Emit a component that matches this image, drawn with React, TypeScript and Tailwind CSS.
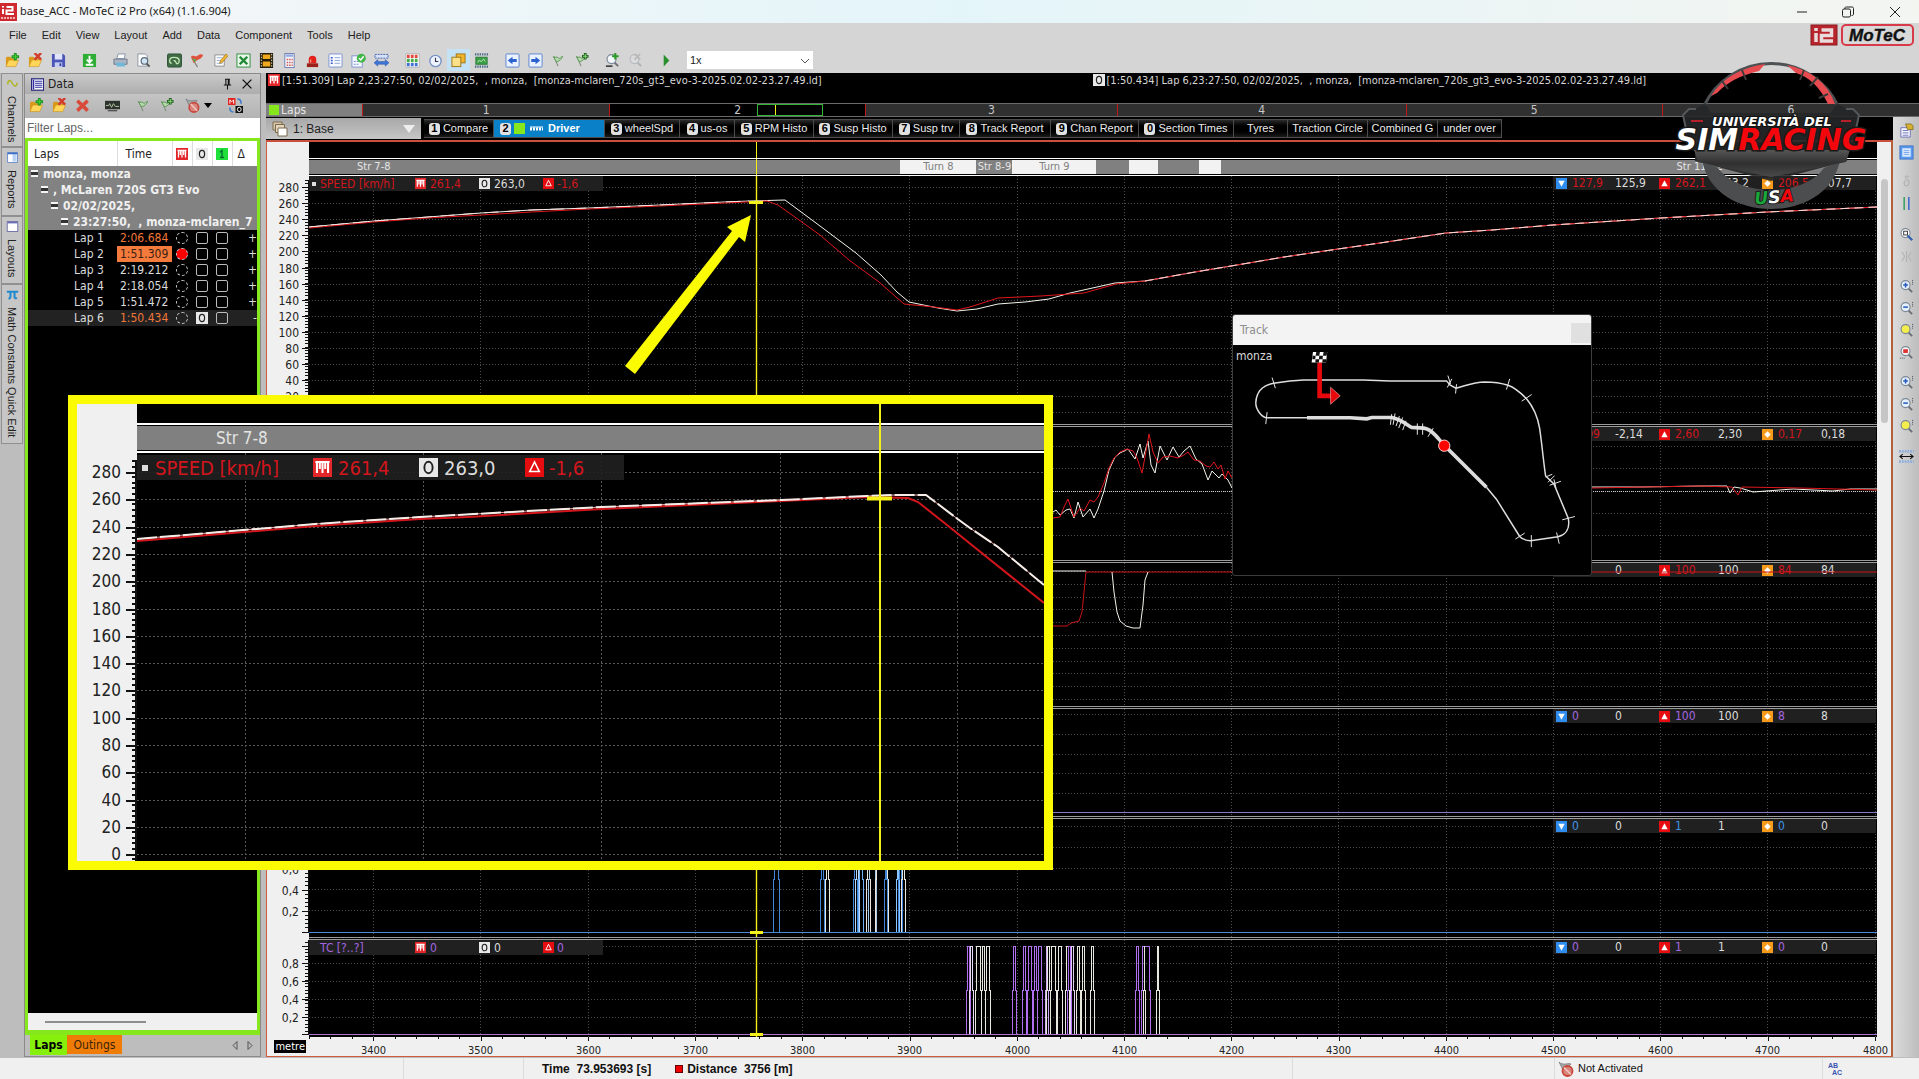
import React from "react";

const TAHOMA = "font-['DejaVu_Sans_Condensed','DejaVu_Sans',sans-serif]";
const UI = "font-['Liberation_Sans',Arial,sans-serif]";

/* ---------- icons (16 x 16) ---------- */
const folder = (
  <>
    <path d="M1 14V5l1-1h4l1 1.500h4.500V8H5z" fill="#d99a1c" />
    <path d="M1 14.500 4 7.500h10.500L11.500 14.500z" fill="#ffd659" stroke="#c98d17" strokeWidth=".6" />
  </>
);
const lens = (c: string) => (
  <>
    <path d="m10 10 4 4" stroke="#6b7076" strokeWidth="2" />
    <circle cx="7" cy="6.500" r="4.800" fill={c} stroke="#7b8794" strokeWidth="1.200" />
  </>
);
const flag = (
  <>
    <path d="M3 3.500 7.500 14" stroke="#7d8f78" strokeWidth="1.200" />
    <path d="M2.500 4c2 2 3.500-1 5 1s3-1 5-1.500c-1 3-3 4.500-6.500 6z" fill="#b8d8b0" stroke="#4f9448" strokeWidth=".9" />
  </>
);
const ICONS: Record<string, React.ReactNode> = {
  open: <>{folder}<path d="M11 0v8M7 4h8" stroke="#1c8e1c" strokeWidth="3" /><path d="M11 1v6M8 4h6" stroke="#3fd03a" strokeWidth="1.200" /></>,
  closeF: <>{folder}<path d="m7 0 7 7m0-7L7 7" stroke="#d33a2c" strokeWidth="2.600" /></>,
  save: <><path d="M1 1h12l2 2v12H1z" fill="#4b55b8" /><path d="M4 1h8v6H4z" fill="#dfe4fb" /><path d="M4 10h8v5H4z" fill="#c6cdf3" /><path d="M9 11h2v3H9z" fill="#39429b" /></>,
  down: <><rect x="1" y="1" width="14" height="14" fill="#2fae35" /><path d="M8 3v6M5 7l3 3 3-3M4 12.500h8" stroke="#fff" strokeWidth="2" fill="none" /></>,
  print: <><path d="M4 6 5.500 1H13l-1 5z" fill="#fff" stroke="#8392a8" /><path d="M1 6.500h14V12H1z" fill="#aab4c4" stroke="#6b7788" /><path d="M3 10.500h9l1 4H4z" fill="#6fb9d8" /></>,
  preview: <><path d="M2 1h8l2 2v11H2z" fill="#fdfdfd" stroke="#8b93a0" /><circle cx="9" cy="8.500" r="3.500" fill="#cfe4f4" stroke="#5f6c7c" strokeWidth="1.300" /><path d="m11.500 11.500 3 3" stroke="#555" strokeWidth="2" /></>,
  track: <><rect x=".5" y="1" width="15" height="14" rx="1.500" fill="#3f6b45" stroke="#2c5034" /><path d="M5 11c-3 0-3-5 0-6s8 0 8 3-2 4-3 3 0-3-3-3" stroke="#c3e8b4" strokeWidth="1.400" fill="none" /></>,
  flagRed: <><path d="M2 5 8 15" stroke="#777" strokeWidth="1.200" /><path d="M1 4c3-3 4 1 7-1s4-2 6-1c-1 3-3 4-5 5S6 9 4 11z" fill="#e05240" /><path d="M2 5c2 1 3 2 5 1l-2 4z" fill="#58ad4d" /></>,
  note: <><path d="M2 2h10v12H2z" fill="#fbfbfb" stroke="#8e8e8e" /><path d="M4 5h6M4 8h5M4 11h6" stroke="#9db2d0" /><path d="m7 11 1-3 6-7 2 2-6 7z" fill="#f2b632" stroke="#8d6412" strokeWidth=".6" /></>,
  excel: <><rect x="1" y="1" width="14" height="14" fill="#e9f6e9" stroke="#2f8b3c" /><path d="m4 4 8 8m0-8-8 8" stroke="#1e8a34" strokeWidth="2.600" /></>,
  film: <><rect x="1" y="0" width="14" height="16" fill="#231c08" /><path d="M4 1.500h8v5H4zM4 9h8v5.500H4z" fill="#f0a81c" /><path d="M2.500 1v14M13.500 1v14" stroke="#efe6c8" strokeWidth="1" strokeDasharray="1.500 1.500" /></>,
  calc: <><rect x="3" y="0.500" width="10" height="15" fill="#f2f4fb" stroke="#6f7fb0" /><path d="M4 1.500h8v2.500H4z" fill="#93a9e0" /><path d="M5 7h6.500M5 10h6.500M5 13h6.500" stroke="#d25d56" strokeWidth="1.600" strokeDasharray="1.600 1" /></>,
  alarm: <><path d="M4 11V7a4 4 0 0 1 8 0v4z" fill="#e3211b" /><path d="M6 10V7" stroke="#ff9b90" strokeWidth="1.300" /><rect x="2" y="11" width="12" height="4" fill="#9a2019" /></>,
  list: <><rect x="1" y="1" width="14" height="14" rx="1" fill="#f6f9ff" stroke="#7d93cf" /><path d="M7 5h6M7 8h6M7 11h6" stroke="#8ea6dc" /><path d="M3 5h2M3 8h2M3 11h2" stroke="#3458c4" strokeWidth="1.600" /></>,
  check: <><rect x="1" y="3" width="11" height="12" fill="#f6f9ff" stroke="#7d93cf" /><path d="M3 9h6M3 12h6" stroke="#6f8bd0" strokeDasharray="2 1" /><circle cx="11" cy="5.500" r="4.800" fill="#42b649" /><path d="m8.500 5.500 2 2 3-4" stroke="#fff" strokeWidth="1.500" fill="none" /></>,
  ruler: <><path d="M1 1.500h14v4H1z" fill="#d7e2fa" stroke="#405fa8" strokeDasharray="2 1" /><path d="M0 10.500 4 7v2h8V7l4 3.500-4 3.500v-2H4v2z" fill="#3e76d8" stroke="#2850a0" strokeWidth=".5" /></>,
  grid: <><rect x="1" y="1" width="14" height="14" fill="#fff" stroke="#888" strokeWidth=".5" />{[0, 1, 2].map((i) => <path key={i} d={`M2 ${3.5 + i * 4.5}h12`} stroke={["#e3473c", "#47ad4a", "#3f6fd6"][i]} strokeWidth="3.500" strokeDasharray="3 1.200" />)}</>,
  clock: <><circle cx="8" cy="8.500" r="6" fill="#eef4ff" stroke="#7b94c4" strokeWidth="1.500" /><path d="M8 5v4h3" stroke="#334" fill="none" strokeWidth="1.200" /></>,
  windows: <><rect x="5.500" y="1" width="9.500" height="9.500" fill="#f3b52c" stroke="#9c7413" /><rect x="1" y="4.500" width="9.500" height="10" fill="#fbe08a" stroke="#9c7413" /></>,
  range: <><path d="M1 1.500h14M1 14.500h14" stroke="#4d6a86" strokeWidth="2.500" strokeDasharray="1.500 1" /><rect x="2" y="4.500" width="12" height="7.500" fill="#3aa048" stroke="#2a7a38" /><path d="M4 10c2-5 3 1 5-2s2 0 3 1" stroke="#d3f0c8" fill="none" /></>,
  left: <><rect x="1" y="1" width="14" height="14" rx="1" fill="#eaf1ff" stroke="#5c83cf" /><path d="m3 8 5-4v2.500h4.500v3H8V12z" fill="#2c62cf" /></>,
  right: <><rect x="1" y="1" width="14" height="14" rx="1" fill="#eaf1ff" stroke="#5c83cf" /><path d="m13 8-5-4v2.500H3.500v3H8V12z" fill="#2c62cf" /></>,
  flag,
  flagPlus: <>{flag}<path d="M12 0v7M8.500 3.500h7" stroke="#1f5f1c" strokeWidth="3" /><path d="M12 1v5M9.500 3.500h5" stroke="#8de07c" strokeWidth="1" /></>,
  zoomPlus: <>{lens("#f2f7fb")}<path d="M11 0v7M7.500 3.500h7" stroke="#2a9a28" strokeWidth="2.200" /><path d="M1 14h7" stroke="#222" strokeWidth="1.500" /></>,
  zoomOff: <g opacity=".35">{lens("#e8e8e8")}<path d="m7 1 6 6m0-6L7 7" stroke="#888" strokeWidth="2" /></g>,
  play: <path d="M5 1.500v13l6-6.500z" fill="#27902c" />,
  del: <path d="m2.500 3 11 10.500m0-10.500-11 10.500" stroke="#d84a3a" strokeWidth="3.800" />,
  scope: <><rect x="0" y="3" width="16" height="9" fill="#2c332c" /><path d="M1 8h3l1-2 2 4 2-4 2 3h4" stroke="#b6c4a2" fill="none" /><path d="M3 13.500h10" stroke="#555" strokeWidth="1.500" /></>,
  block: <><path d="M1 1c2 2 4 2 6 2s4-1 6 0l-4 4-4 2z" fill="#a3aaa3" stroke="#667" strokeWidth=".6" /><circle cx="9.500" cy="10" r="5" fill="#d9867c" stroke="#c9463c" strokeWidth="1.800" /><path d="m6 6.500 7 7" stroke="#f2c9c3" strokeWidth="1.500" /></>,
  swap: <><rect x="0" y="0" width="8" height="7.500" fill="#e02420" /><path d="M2 6V2l2 2 2-2v4" stroke="#fff" fill="none" /><rect x="8" y="8.500" width="8" height="7.500" fill="#111" /><ellipse cx="12" cy="12.200" rx="2" ry="2.300" stroke="#fff" fill="none" /><path d="M10 1c4 0 4 3 4 5M6 15c-4 0-4-3-4-5" stroke="#3d77cc" strokeWidth="1.600" fill="none" /></>,
  props: <><path d="M2 5h10v10H2z" fill="#f7f7ff" stroke="#6d72b8" /><path d="M4 8h6M4 10.500h6M4 13h6" stroke="#6d72b8" /><path d="M7 1h6l2 2v4H9z" fill="#d6b12f" stroke="#6f5a12" strokeWidth=".7" /></>,
  blue: <><rect x="1" y="1" width="14" height="14" fill="#5b9af0" stroke="#3f72c5" /><rect x="3.500" y="3.500" width="9" height="9" fill="#dcebff" /><path d="M5 6h6M5 8h6M5 10h6" stroke="#79a6e6" /></>,
  delta: <path d="M10.500 3c-3-2-5 0-2 2.500s3 6 0 7-4.500-4-1-5.500" stroke="#b0b0b0" fill="none" strokeWidth="1.200" />,
  slashes: <path d="M3 3l3 5-3 5M13 3l-3 5 3 5M8 2v12" stroke="#b4b4b4" fill="none" strokeWidth="1.200" />,
  bars: <><path d="M5.500 1v14" stroke="#2d9b57" strokeWidth="1.500" /><path d="M10.500 1v14" stroke="#2e5fd0" strokeWidth="1.500" /></>,
  zoomIn: <>{lens("#e6f0fa")}<path d="M7 4v5M4.500 6.500h5" stroke="#2459bf" strokeWidth="1.600" /><path d="M14.500 1v6" stroke="#345" strokeDasharray="1 1" /></>,
  zoomOut: <>{lens("#e6f0fa")}<path d="M4.500 6.500h5" stroke="#2459bf" strokeWidth="1.600" /><path d="M14.500 1v6" stroke="#345" strokeDasharray="1 1" /></>,
  zoomY: <>{lens("#f4ee4c")}<path d="M14.500 1v6" stroke="#345" strokeDasharray="1 1" /></>,
  zoomR: <>{lens("#f6f6f6")}<rect x="4.500" y="4.500" width="5" height="4" fill="#d33" /><path d="M1 14h6" stroke="#345" strokeDasharray="1 1" /></>,
  zoomW: <>{lens("#ffffff")}<path d="m9 9 5 5" stroke="#2f62b5" strokeWidth="2.200" /><rect x="5" y="4.500" width="4" height="4" fill="none" stroke="#333" /></>,
  fit: <><path d="M0 2.500h16M0 13.500h16" stroke="#8fb0dc" strokeWidth="3" strokeDasharray="2 1" /><path d="M1 8h14M4 5.500 1 8l3 2.500M12 5.500 15 8l-3 2.500" stroke="#111" fill="none" strokeWidth="1.200" /></>,
  wave: <path d="M2 9c1-7 4-5 6-1s4 5 6-1" stroke="#b0b51d" strokeWidth="1.800" fill="none" />,
  report: <><rect x="2" y="2" width="12" height="12" fill="#fff" stroke="#5a82c8" /><path d="M8 3h5v10H8z" fill="#bcd3f4" /><path d="M2 3h12" stroke="#3d6fc4" strokeWidth="2" /></>,
  layout: <><rect x="1.500" y="2" width="13" height="12" fill="#fff" stroke="#5b5f9b" /><path d="M2 3.200h12" stroke="#6a70b4" strokeWidth="2" /></>,
  pi: <path d="M1 4.500h14M5.500 4v6c0 2-1 3-2.500 3M10.500 4v7c0 2 1.500 2 3 1" stroke="#1f8ad0" strokeWidth="2.500" fill="none" />,
  data: <><rect x=".5" y="1" width="15" height="14" fill="#fff" stroke="#26267c" strokeWidth="1.500" /><path d="M5 4h9M5 6.500h9M5 9h9M5 11.500h9" stroke="#2d2da0" strokeWidth="1.300" /><path d="M3 2v12" stroke="#2d2da0" strokeWidth="2" /></>,
  pin: <path d="M5 1.500h6M6 1.500v7M10 1.500v7M9 1.500v7M3.500 8.500h9M8 8.500V14" stroke="#111" strokeWidth="1.300" />,
  x: <path d="m3 3 10 10m0-10L3 13" stroke="#111" strokeWidth="1.600" />,
  stack: <><path d="M1 1h9v8H1z" fill="#d9c7ab" stroke="#7c6a4c" /><path d="M3.500 3.500h9v8h-9z" fill="#e5d6bd" stroke="#7c6a4c" /><path d="M6 7h9v8H6z" fill="#fff" stroke="#7c6a4c" /></>,
};

function Icon({ n, size = 16 }: { n: string; size?: number }) {
  return (
    <svg width={size} height={size} viewBox="0 0 16 16" fill="none" aria-hidden="true" className="shrink-0">
      {ICONS[n]}
    </svg>
  );
}

function IconButton({ n, on }: { n: string; on?: boolean }) {
  return (
    <button aria-label={n} className={`flex h-[22px] w-[23px] shrink-0 items-center justify-center ${on ? "bg-[#c4e2f6]" : ""}`}>
      <Icon n={n} size={15} />
    </button>
  );
}

/* ---------- small channel badges ---------- */
function Badge({ kind, size = 12 }: { kind: "M" | "O" | "D" | "min" | "max" | "avg" | "one"; size?: number }) {
  const bg = { M: "#e3262a", O: "#e8e8e8", D: "#e60d10", min: "#2f8df0", max: "#e60d10", avg: "#f59a1b", one: "#1fe03a" }[kind];
  return (
    <svg width={size} height={size} viewBox="0 0 12 12" className="shrink-0" aria-hidden="true">
      <rect width="12" height="12" fill={bg} />
      {kind === "M" && <path d="M1.500 2.500h9M2.500 2.500v7M6 2.500v7M9.500 2.500v7M4.300 3v4M7.700 3v4" stroke="#fff" strokeWidth="1.300" fill="none" />}
      {kind === "O" && <ellipse cx="6" cy="6" rx="2.600" ry="3.600" fill="none" stroke="#222" strokeWidth="1.200" />}
      {kind === "D" && <path d="M6 2.500 9 8.500H3z" fill="none" stroke="#fff" />}
      {kind === "min" && <path d="M2.500 3h7L6 9.500z" fill="#fff" />}
      {kind === "max" && <path d="M2.500 9h7L6 2.500z" fill="#fff" />}
      {kind === "avg" && <path d="m6 2.500 3.500 3.500L6 9.500 2.500 6z" fill="#fff" />}
      {kind === "one" && <path d="M4 4.200 6 2.500v7M4 9.500h4" stroke="#063" fill="none" strokeWidth="1.300" />}
    </svg>
  );
}

/* ---------- chart data ---------- */
const LEFT = 309;
const WIDTH = 1568;
const CURSOR = 756;
const GRID_X = Array.from({ length: 15 }, (_, i) => Math.round(373 + i * 107.25) + 0.5);

const SPEED_HEAD = "309,227 374,221 428,217 481,213 531,210 589,208 660,205 724,202 749,201";
const SPEED_TAIL = "1145,281 1195,272 1231,266 1284,257 1338,249 1380,243 1406,239 1446,233 1492,230 1553,225 1661,218 1767,212 1877,207";
const SPEED_W = `${SPEED_HEAD} 785,200 820,226 856,253 881,275 897,292 909,302 938,308 957,311 977,309 998,304 1025,302 1049,299 1070,293 1115,283 ${SPEED_TAIL}`;
const SPEED_R = `309,228 374,222 428,218 481,215 531,212 589,209 660,206 724,203 767,201 778,205 820,235 849,260 879,282 904,304 934,307 957,310 970,307 998,298 1041,296 1084,293 1116,284 ${SPEED_TAIL}`;
const G_W = "1044,516 1053,512 1056,510 1060,515 1066,510 1070,509 1074,518 1078,502 1083,517 1090,509 1094,518 1098,509 1104,491 1109,470 1115,457 1120,453 1128,449 1135,459 1140,444 1143,458 1148,441 1151,465 1155,473 1160,446 1163,452 1167,460 1173,447 1179,457 1184,451 1190,446 1196,459 1202,464 1208,480 1212,471 1219,478 1222,474 1228,480 1232,488 1400,487 1592,487 1640,487 1700,486 1727,486 1730,493 1734,487 1740,488 1747,490 1753,492 1793,489 1833,491 1850,489 1877,489";
const G_R = "1044,518 1053,518 1060,517 1064,507 1068,499 1074,517 1080,508 1084,511 1090,500 1094,502 1098,497 1104,483 1109,468 1114,458 1120,452 1127,449 1133,451 1137,458 1142,473 1145,457 1149,434 1153,452 1158,463 1163,457 1170,456 1178,458 1184,455 1188,452 1194,460 1200,461 1206,466 1210,467 1214,462 1218,469 1221,465 1225,479 1228,471 1232,478 1400,488 1592,488 1700,486 1732,487 1738,495 1742,487 1800,488 1877,490";
const THR_R = "1044,626 1067,626 1071,623 1079,621 1082,612 1086,572 1877,572";
const THR_W1 = "1044,571 1086,571";
const THR_W2 = "1112,572 1114,592 1117,612 1120,621 1126,626 1133,628 1140,628 1143,605 1145,580 1148,572";

type Pulse = [number, number, string];
const BLUE = "#3f86d6";
const PURPLE = "#b070f0";
const PALE = "#e8e8de";
const ABS: Pulse[] = [
  [773, 779, BLUE], [820, 824, BLUE], [825, 829, PALE], [853, 857, BLUE], [855, 859, "#bcd8f8"], [858, 863, "#6db0f5"],
  [866, 870, PALE], [868, 876, "#a9c8e8"], [875, 888, PALE], [884, 887, BLUE], [896, 899, "#8cc4ff"], [898, 902, BLUE], [901, 905, PALE],
];
const TC: Pulse[] = [
  [966, 970, PURPLE], [969, 973, "#e8dcf4"], [975, 981, PALE], [981, 985, PALE], [985, 990, PALE], [1012, 1016, PURPLE],
  [1022, 1026, PURPLE], [1027, 1032, PURPLE], [1033, 1037, PURPLE], [1037, 1042, PURPLE], [1045, 1048, "#d0a8f4"], [1046, 1050, PALE],
  [1050, 1056, PALE], [1057, 1062, PALE], [1065, 1069, PALE], [1067, 1071, PURPLE], [1070, 1074, "#e2cff2"], [1076, 1080, PALE],
  [1081, 1085, PALE], [1090, 1094, PALE], [1135, 1139, PURPLE], [1141, 1150, PURPLE], [1143, 1145, PALE], [1156, 1159, PALE],
];

function Pulses({ data, top, mid, base }: { data: Pulse[]; top: number; mid: number; base: number }) {
  return (
    <g shapeRendering="crispEdges">
      {data.map(([a, b, c], i) => (
        <polyline key={i} points={`${a},${base} ${a},${mid} ${a + 1},${mid} ${a + 1},${top} ${b - 1},${top} ${b - 1},${mid} ${b},${mid} ${b},${base}`} stroke={c} fill="none" />
      ))}
    </g>
  );
}

function Trace({ pts, c }: { pts: string; c: string }) {
  return <polyline points={pts} stroke={c} fill="none" strokeWidth="1" />;
}

/* ---------- panel pieces ---------- */
type Tick = [number, string];
function Axis({ top, height, ticks, sub }: { top: number; height: number; ticks: Tick[]; sub: number }) {
  const pct = (y: number) => `${((y - top) / height) * 100}%`;
  const step = ticks.length > 1 ? (ticks[1][0] - ticks[0][0]) / sub : 0;
  const minor = step ? Array.from({ length: (ticks.length - 1) * sub + 3 }, (_, i) => ticks[0][0] + (i - 2) * step) : [];
  return (
    <svg className={`h-full w-[42px] shrink-0 overflow-hidden text-[12px] ${TAHOMA}`} shapeRendering="crispEdges">
      <line x1="41.5" x2="41.5" y1={pct(minor[0] ?? top)} y2={pct(ticks.length ? ticks[ticks.length - 1][0] : top)} stroke="#111" />
      {minor.map((y, i) => <line key={i} x1="38" x2="42" y1={pct(y)} y2={pct(y)} stroke="#111" />)}
      {ticks.map(([y, t]) => (
        <g key={y}>
          <line x1="35" x2="42" y1={pct(y)} y2={pct(y)} stroke="#111" />
          <text x="32" y={pct(y)} dy="5" textAnchor="end" fill="#222">{t}</text>
        </g>
      ))}
    </svg>
  );
}

type Pair = [string, string];
function Stats({ min, max, avg, color }: { min: Pair; max: Pair; avg: Pair; color: string }) {
  return (
    <div className={`absolute right-[1px] top-0 flex h-[14px] w-[323px] items-center bg-[#202020] text-[12px] leading-[14px] ${TAHOMA}`}>
      {([["min", min], ["max", max], ["avg", avg]] as [("min" | "max" | "avg"), Pair][]).map(([k, v]) => (
        <div key={k} className="flex w-[103px] shrink-0 items-center pl-[3px]">
          <Badge kind={k} size={11} />
          <span className={`w-[48px] shrink-0 pl-[5px] ${color}`}>{v[0]}</span>
          <span className="text-[#dcdcdc]">{v[1]}</span>
        </div>
      ))}
    </div>
  );
}

function Legend({ label, values, color, dot }: { label: string; values: [string, string, string]; color: string; dot?: boolean }) {
  return (
    <div className={`absolute left-0 top-0 flex h-[15px] w-[294px] items-center bg-[#202020] text-[12px] leading-[14px] ${color} ${TAHOMA}`}>
      <span className="w-[11px] pl-[3px]">{dot && <span className="block size-[4px] bg-[#ddd]" />}</span>
      <span className="w-[95px]">{label}</span>
      <span className="flex w-[64px] items-center gap-[4px]"><Badge kind="M" size={11} />{values[0]}</span>
      <span className="flex w-[64px] items-center gap-[4px]"><Badge kind="O" size={11} /><span className="text-[#dcdcdc]">{values[1]}</span></span>
      <span className="flex items-center gap-[3px]"><Badge kind="D" size={11} />{values[2]}</span>
    </div>
  );
}

function Panel(p: {
  grow: string; top: number; height: number; ticks: Tick[]; sub: number; rows: number[];
  last?: boolean; overlay: React.ReactNode; children: React.ReactNode;
}) {
  return (
    <>
      <div className={`flex min-h-0 ${p.grow}`}>
        <Axis top={p.top} height={p.height} ticks={p.ticks} sub={p.sub} />
        <div className="relative min-w-0 flex-1 bg-black">
          <svg className="absolute inset-0 h-full w-full" viewBox={`${LEFT} ${p.top} ${WIDTH} ${p.height}`} preserveAspectRatio="none" fill="none">
            <g stroke="#4d4d4d" strokeDasharray="1 2" shapeRendering="crispEdges">
              {p.rows.map((y) => <path key={y} d={`M${LEFT} ${y + 0.5}h${WIDTH}`} />)}
              {GRID_X.map((x) => <path key={x} d={`M${x} ${p.top}v${p.height}`} />)}
            </g>
          </svg>
          {p.overlay}
          <svg className="absolute inset-0 h-full w-full" viewBox={`${LEFT} ${p.top} ${WIDTH} ${p.height}`} preserveAspectRatio="none" fill="none">
            {p.children}
            <path d={`M${CURSOR + 0.5} ${p.top}v${p.height}`} stroke="#f4f01c" strokeWidth="1.400" />
          </svg>
        </div>
      </div>
      {!p.last && <div className="ml-[42px] h-[3px] shrink-0 border-y border-[#9a9a9a] bg-black" />}
    </>
  );
}

const SECTIONS: [string, string, boolean][] = [
  ["flex-[591_1_0%]", "", false],
  ["flex-[76_1_0%]", "Turn 8", true],
  ["flex-[36_1_0%]", "Str 8-9", false],
  ["flex-[84_1_0%]", "Turn 9", true],
  ["flex-[32_1_0%]", "", false],
  ["flex-[29_1_0%]", "", true],
  ["flex-[41_1_0%]", "", false],
  ["flex-[22_1_0%]", "", true],
  ["flex-[656_1_0%]", "", false],
];

const range = (a: number, step: number, n: number) => Array.from({ length: n }, (_, i) => a + Math.round(i * step));

function Chart() {
  const red = "text-[#d3151c]";
  return (
    <section aria-label="Driver graph" className="flex min-h-0 flex-1 border-b border-l border-r-2 border-t-2 border-b-[#cf5a3c] border-l-[#cf5a3c] border-r-[#b55f3b] border-t-[#c8503c] bg-[#f0f0f0]">
      <div className="flex min-h-0 min-w-0 flex-1 flex-col">
        <div className="relative ml-[42px] h-[16px] shrink-0 bg-black">
          <div className="absolute left-[28.500%] top-0 h-full w-[1px] bg-[#f4f01c]" />
        </div>
        <div className={`relative ml-[42px] flex h-[18px] shrink-0 border-y border-white bg-black py-[1px] text-center text-[11px] leading-[14px] ${TAHOMA}`}>
          {SECTIONS.map(([grow, t, turn], i) => (
            <div key={i} className={`overflow-visible whitespace-nowrap ${grow} min-w-0 ${turn ? "bg-[#f2f2f2] text-[#808080]" : "bg-[#808080] text-[#e6e6e6]"}`}>
              {i === 0 ? <span className="block pl-[48px] text-left">Str 7-8</span> : i === 8 ? <span className="block pl-[456px] text-left">Str 11-12</span> : t}
            </div>
          ))}
          <div className="absolute left-[28.500%] top-0 h-full w-[1px] bg-[#f4f01c]" />
        </div>
        <Panel grow="flex-[248_1_0%]" top={176} height={248} sub={5} ticks={range(187, 16.1, 15).map((y, i) => [y, String(280 - i * 20)])} rows={range(187, 16.1, 15)}
          overlay={<><Legend dot label="SPEED [km/h]" values={["261,4", "263,0", "-1,6"]} color={red} /><Stats min={["127,9", "125,9"]} max={["262,1", "263,2"]} avg={["206,5", "207,7"]} color={red} /></>}>
          <Trace pts={SPEED_W} c="#f4f4ec" />
          <Trace pts={SPEED_R} c="#e0161c" />
          <polyline points={SPEED_HEAD} stroke="#fbe0dc" strokeDasharray="14 8" />
          <polyline points={SPEED_TAIL} stroke="#f7dedb" strokeDasharray="9 5" />
          <path d="M749 202.500h14" stroke="#f4f01c" strokeWidth="3" />
        </Panel>
        <Panel grow="flex-[133_1_0%]" top={427} height={133} sub={4} ticks={range(446, 22.3, 5).map((y, i) => [y, String(2 - i)])} rows={range(446, 22.3, 5)}
          overlay={<Stats min={["-1,99", "-2,14"]} max={["2,60", "2,30"]} avg={["0,17", "0,18"]} color={red} />}>
          <path d="M309 491.500h1568" stroke="#c8c8c8" strokeDasharray="1 1" />
          <Trace pts={G_W} c="#f4f4ec" />
          <Trace pts={G_R} c="#e0161c" />
        </Panel>
        <Panel grow="flex-[143_1_0%]" top={563} height={143} sub={2} ticks={range(584, 12.8, 10).map((y, i) => [y, String(90 - i * 10)])} rows={range(571, 12.8, 11)}
          overlay={<Stats min={["0", "0"]} max={["100", "100"]} avg={["84", "84"]} color={red} />}>
          <Trace pts={THR_R} c="#c81418" />
          <Trace pts={THR_W1} c="#f4f4ec" />
          <Trace pts={THR_W2} c="#f4f4ec" />
        </Panel>
        <Panel grow="flex-[107_1_0%]" top={709} height={107} sub={4} ticks={range(714, 19.8, 6).map((y, i) => [y, String(100 - i * 20)])} rows={range(714, 19.8, 5)}
          overlay={<Stats min={["0", "0"]} max={["100", "100"]} avg={["8", "8"]} color="text-[#a466e0]" />}>
          <path d="M309 812.500h1568" stroke="#8a78c4" />
        </Panel>
        <Panel grow="flex-[118_1_0%]" top={819} height={118} sub={5} ticks={[[869, "0,6"], [890, "0,4"], [911, "0,2"], [932, ""]]} rows={range(826, 21, 5)}
          overlay={<Stats min={["0", "0"]} max={["1", "1"]} avg={["0", "0"]} color="text-[#3f93e8]" />}>
          <path d="M309 932.500h1568" stroke="#4a8ad8" />
          <Pulses data={ABS} top={826} mid={879} base={932} />
          <path d="M750 932.500h13" stroke="#f4f01c" strokeWidth="3" />
        </Panel>
        <Panel last grow="flex-[97_1_0%]" top={940} height={97} sub={5} ticks={[[946, ""], [963, "0,8"], [981, "0,6"], [999, "0,4"], [1017, "0,2"], [1034, ""]]} rows={[946, 963, 981, 999, 1017]}
          overlay={<><Legend label="TC [?..?]" values={["0", "0", "0"]} color="text-[#a466e0]" /><Stats min={["0", "0"]} max={["1", "1"]} avg={["0", "0"]} color="text-[#a466e0]" /></>}>
          <path d="M309 1034.500h1568" stroke="#a874cf" />
          <Pulses data={TC} top={946} mid={990} base={1034} />
          <path d="M750 1034.500h13" stroke="#f4f01c" strokeWidth="3" />
        </Panel>
        <div className={`flex h-[19px] shrink-0 text-[11px] ${TAHOMA}`}>
          <div className="flex w-[42px] items-center justify-end pr-[3px]"><span className="bg-black px-[1px] leading-[13px] text-white">metre</span></div>
          <div className="relative flex-1">
            <svg className="absolute inset-0 h-full w-full overflow-visible" shapeRendering="crispEdges">
              {Array.from({ length: 74 }, (_, i) => (
                <line key={i} x1={`${((0.5 + i * 21.45) / WIDTH) * 100}%`} x2={`${((0.5 + i * 21.45) / WIDTH) * 100}%`} y1="0" y2={i % 5 === 3 ? 4 : 2} stroke="#111" />
              ))}
              {GRID_X.map((x, i) => (
                <text key={x} x={`${((x - LEFT) / WIDTH) * 100}%`} y="17" textAnchor="middle" fill="#222">{3400 + i * 100}</text>
              ))}
            </svg>
          </div>
        </div>
      </div>
      <div className="relative w-[14px] shrink-0"><div className="mx-auto mt-[37px] h-[244px] w-[7px] rounded-full bg-[#c6c6c6]" /></div>
    </section>
  );
}

/* ---------- magnified view ---------- */
function Magnifier() {
  const ys = range(472, 27.3, 15);
  const head = "137,539 315,524 420,517 602,507 781,500 867,496";
  const white = `${head} 895,495 926,495 959,520 970,528 998,547 1044,585`;
  const redPts = "137,541 315,526 420,519 468,517 602,509 781,501 867,497 908,498 918,502 947,525 978,550 1044,603";
  return (
    <div className={`absolute left-[68px] top-[395px] flex h-[475px] w-[985px] border-[9px] border-[#fbfb04] bg-[#f0f0f0] ${TAHOMA}`}>
      <svg className="h-full w-[60px] shrink-0 overflow-hidden text-[17px]" viewBox="77 404 60 457">
        {ys.map((y, i) => (
          <g key={y} shapeRendering="crispEdges">
            <path d={`M126 ${y + 0.5}h11`} stroke="#111" strokeWidth="2" />
            {[-2, -1, 1, 2].map((k) => <path key={k} d={`M132 ${y + k * 5.46}h5`} stroke="#111" strokeWidth="2" />)}
            <text x="121" y={y + 6} textAnchor="end" fill="#222">{280 - i * 20}</text>
          </g>
        ))}
        <path d="M136 461v400" stroke="#111" strokeWidth="2" />
      </svg>
      <div className="relative flex flex-1 flex-col bg-black">
        <div className="h-[19px] shrink-0" />
        <div className="h-[30px] shrink-0 border-y-2 border-white py-[1px]"><div className="h-full bg-[#808080] pl-[79px] text-[17px] leading-[24px] text-[#e4e4e4]">Str 7-8</div></div>
        <div className="relative flex-1">
          <svg className="absolute inset-0 h-full w-full" viewBox="137 453 907 408" preserveAspectRatio="none" fill="none">
            <g stroke="#565656" strokeDasharray="2 2" shapeRendering="crispEdges">
              {ys.map((y) => <path key={y} d={`M137 ${y + 0.5}h907`} />)}
              {[245, 423, 601, 780, 957].map((x) => <path key={x} d={`M${x + 0.5} 453v408`} />)}
            </g>
            <polyline points={redPts} stroke="#d3151c" strokeWidth="2" />
            <polyline points={white} stroke="#f0a8a4" strokeWidth="1" />
            <polyline points={white} stroke="#f6ece8" strokeWidth="2" strokeDasharray="20 3" />
            <path d="M867 498.500h25" stroke="#f4f01c" strokeWidth="4" />
          </svg>
          <div className="absolute left-0 top-[2px] flex h-[25px] w-[487px] items-center bg-[#202020]/90 text-[20px] leading-[24px] text-[#d3151c]">
            <span className="w-[18px] pl-[5px]"><span className="block size-[6px] bg-[#ddd]" /></span>
            <span className="w-[158px]">SPEED [km/h]</span>
            <span className="flex w-[106px] items-center gap-[6px]"><Badge kind="M" size={19} />261,4</span>
            <span className="flex w-[106px] items-center gap-[6px]"><Badge kind="O" size={19} /><span className="text-[#dcdcdc]">263,0</span></span>
            <span className="flex items-center gap-[5px]"><Badge kind="D" size={19} />-1,6</span>
          </div>
        </div>
        <div className="absolute bottom-0 left-[742px] top-0 w-[2px] bg-[#f4f01c]" />
      </div>
    </div>
  );
}

/* ---------- floating track map ---------- */
function TrackWindow() {
  const tick = "M155 232l10 32M140 336l-4 36M684 226l8 26M682 262l14-26M710 252l-3 28M870 236l-10 32M906 303l30-20M978 531l20-8M985 547l20-20M990 556l34-12M1003 538l6 26M1028 660l38-10M1011 698l8 34M887 718l28-18M935 706v36M515 342l-4 32M525 340l-6 34M538 348l-10 30M548 352l-12 32M558 362l-10 28M592 370v34M608 370v34M640 384l-16 26";
  return (
    <div className="absolute left-[1232px] top-[314px] flex h-[262px] w-[360px] flex-col overflow-hidden rounded-[3px] border border-[#3c3c3c] bg-black">
      <div className={`flex h-[30px] shrink-0 items-center justify-between bg-[#f3f3f3] pl-[7px] text-[12px] text-[#8c8c8c] ${TAHOMA}`}>
        Track
        <button aria-label="Close track" className="mt-[5px] h-[20px] w-[20px] bg-[#e0e0e0]" />
      </div>
      <div className={`relative flex-1 text-[12px] text-[#d8d8d8] ${TAHOMA}`}>
        <span className="absolute left-[3px] top-[2px]">monza</span>
        <svg className="absolute inset-0 h-full w-full" viewBox="39 134 1074 692" fill="none">
          <path d="M140 353C125 352 106 330 106 308C108 262 140 252 165 248C200 242 220 240 250 239H430L510 242H680L690 254L708 264C740 256 760 246 795 245C830 245 850 250 865 255C890 264 905 280 920 295C945 325 955 355 960 385C968 440 972 490 978 528L1003 552L1046 655C1052 685 1040 705 1015 711L933 723C915 722 905 716 900 710L830 598L800 562" stroke="#dedede" strokeWidth="4.500" />
          <path d="M140 353H260" stroke="#dedede" strokeWidth="5" />
          <path d="M260 353H390L440 356L455 352H515C545 358 560 374 575 382L612 384C635 388 642 402 655 415L673 436L800 562" stroke="#dcdcdc" strokeWidth="11" />
          <path d={tick} stroke="#e6e6e6" strokeWidth="3" />
          <path d="M298 186V287H345" stroke="#e6080c" strokeWidth="14" />
          <path d="M331 261v51l29-25z" fill="#e6080c" stroke="#e9a0a0" strokeWidth="2" />
          <path d="M278 155h43l-4 32h-43z" fill="#fff" />
          <path d="M288 155h11l-2 11h-11zM310 155h11l-2 11h-11zM277 166h9l-1 11h-9zM297 166h11l-1 11h-11zM286 177h11l-1 10h-11zM307 177h11l-1 10h-11z" fill="#111" />
          <circle cx="673" cy="437" r="17" fill="#f00" stroke="#ffd0d0" strokeWidth="3" />
        </svg>
      </div>
    </div>
  );
}

/* ---------- emblem ---------- */
function Emblem() {
  return (
    <svg className="absolute right-[46px] top-[58px] h-[154px] w-[206px]" viewBox="1667 58 206 154" role="img" aria-label="Università del Simracing USA">
      <defs>
        <linearGradient id="carbon" x1="0" y1="0" x2="0" y2="1"><stop offset="0" stopColor="#555" /><stop offset=".5" stopColor="#303030" /><stop offset="1" stopColor="#4a4a4a" /></linearGradient>
      </defs>
      <path d="M1704 106A74 74 0 0 1 1838 106" fill="none" stroke="#4d5153" strokeWidth="3" />
      <path d="M1711 96Q1727 70 1765 64L1759 71Q1732 77 1717 93z" fill="#e84b4f" />
      <path d="M1787 65Q1824 73 1835 104L1828 104Q1816 79 1796 73z" fill="#e84b4f" />
      <path d="m1722 81 6 8m14-19 4 10m58-10-4 10m18-3-8 9m18 8-9 4" stroke="#3b3b3b" strokeWidth="2" />
      <path d="M1705 103 1696 109h-7l-6 6 4 34 8 2v10l76 20 76-20v-10l8-2 4-34-6-6h-7l-9-6-6 10h-120z" fill="#262728" opacity=".9" />
      <path d="M1696 109h-7l-6 6 3 14M1846 109h7l6 6-3 14" fill="none" stroke="#54585a" strokeWidth="2" />
      <path d="M1702 160C1708 192 1738 209 1771 209S1834 192 1840 160L1824 168C1812 184 1790 190 1771 190S1730 184 1718 168z" fill="#4b4d4e" />
      <path d="M1694 150h156l-4 12-75 15-73-15z" fill="url(#carbon)" />
      <path d="M1691 121h12M1841 121h10" stroke="#b71f2a" strokeWidth="2" />
      <g className="font-['DejaVu_Sans',sans-serif] font-bold italic">
        <text x="1772" y="126" textAnchor="middle" fontSize="13" fill="#fff" stroke="#111" strokeWidth="2" paintOrder="stroke">UNIVERSITÀ DEL</text>
        <text x="1771" y="150" textAnchor="middle" fontSize="30" fill="#fff" stroke="#1a1a1a" strokeWidth="3" paintOrder="stroke">SIM<tspan fill="#f4070c">RACING</tspan></text>
        <g fontSize="17" stroke="#1a1a1a" strokeWidth="2" paintOrder="stroke" transform="rotate(-5 1773 197)">
          <text x="1774" y="203" textAnchor="middle" fill="#19a83a">U<tspan fill="#fff">S</tspan><tspan fill="#f4070c">A</tspan></text>
        </g>
      </g>
    </svg>
  );
}

/* ---------- left side ---------- */
const SIDE_TABS: [string, string, string][] = [
  ["wave", "Channels", "h-[74px]"],
  ["report", "Reports", "h-[69px]"],
  ["layout", "Layouts", "h-[68px]"],
  ["pi", "Math Constants Quick Edit", "h-[160px]"],
];

const LAPS: [string, string, string][] = [
  ["Lap 1", "2:06.684", "text-[#f07838]"],
  ["Lap 2", "1:51.309", "bg-[#f47b3c] text-[#3a2010]"],
  ["Lap 3", "2:19.212", "text-[#dcdcdc]"],
  ["Lap 4", "2:18.054", "text-[#dcdcdc]"],
  ["Lap 5", "1:51.472", "text-[#dcdcdc]"],
  ["Lap 6", "1:50.434", "text-[#f07838]"],
];

const GROUPS: [string, string][] = [
  ["pl-[3px]", "monza, monza"],
  ["pl-[13px]", ", McLaren 720S GT3 Evo"],
  ["pl-[23px]", "02/02/2025,"],
  ["pl-[33px]", "23:27:50,  , monza-mclaren_7"],
];

function DataPanel() {
  return (
    <aside className="flex w-[237px] shrink-0 flex-col border border-[#8a8a8a] bg-[#bdbdbd]">
      <div className={`flex h-[20px] shrink-0 items-center gap-[4px] bg-gradient-to-b from-[#c9c9c9] to-[#adadad] px-[6px] text-[12px] text-[#1c1c1c] ${TAHOMA}`}>
        <Icon n="data" size={13} />Data
        <span className="flex-1" />
        <button aria-label="Pin"><Icon n="pin" size={13} /></button>
        <button aria-label="Close" className="ml-[2px]"><Icon n="x" size={14} /></button>
      </div>
      <div className="flex h-[24px] shrink-0 items-start bg-gradient-to-b from-[#c4c4c4] to-[#b4b4b4]">
        {["open", "closeF", "del"].map((n) => <IconButton key={n} n={n} />)}
        <span className="w-[7px]" /><IconButton n="scope" /><span className="w-[8px]" />
        <IconButton n="flag" /><IconButton n="flagPlus" /><span className="w-[3px]" /><IconButton n="block" />
        <span className="mt-[9px] border-x-[4px] border-t-[5px] border-x-transparent border-t-black" />
        <span className="w-[12px]" /><IconButton n="swap" />
      </div>
      <input aria-label="Filter laps" placeholder="Filter Laps..." className={`h-[20px] w-full shrink-0 bg-white px-[2px] text-[12px] placeholder:text-[#666] ${UI}`} />
      <div className="flex min-h-0 flex-1 flex-col border-[3px] border-b-[5px] border-[#86e81c] bg-black">
        <table className={`w-full table-fixed border-collapse text-left text-[12px] leading-[16px] ${TAHOMA}`}>
          <colgroup><col className="w-[89px]" /><col className="w-[55px]" /><col className="w-[20px]" /><col className="w-[20px]" /><col className="w-[20px]" /><col /></colgroup>
          <thead>
            <tr className="h-[25px] bg-white text-[#222]">
              <th className="p-0 pl-[6px] font-normal">Laps</th>
              <th className="border-l border-[#ddd] p-0 pl-[8px] font-normal">Time</th>
              {(["M", "O", "one"] as const).map((k) => <th key={k} className="border-l border-[#ddd] p-0 pl-[3px]"><Badge kind={k} /></th>)}
              <th className="border-l border-[#ddd] p-0 pl-[5px] font-normal">Δ</th>
            </tr>
          </thead>
          <tbody>
            {GROUPS.map(([pad, t]) => (
              <tr key={t} className="h-[16px] bg-[#828282] font-bold text-[#f0f0f0]">
                <td colSpan={6} className={`overflow-hidden whitespace-pre p-0 ${pad}`}>
                  <span className="mr-[5px] inline-block h-[7px] w-[7px] border-y-[2px] border-[#f4f4f4] bg-[#333] align-[1px]" />{t}
                </td>
              </tr>
            ))}
            {LAPS.map(([lap, time, c], i) => (
              <tr key={lap} className={`h-[16px] ${i === 5 ? "bg-[#222]" : ""} text-[#dcdcdc]`}>
                <td className="p-0 pl-[46px]">{lap}</td>
                <td className={`p-0 pl-[3px] ${c}`}>{time}</td>
                {[0, 1, 2].map((k) => (
                  <td key={k} className="p-0 pl-[4px]">
                    {k === 0 && <span className={`block size-[12px] rounded-full border border-dashed border-[#ccc] ${i === 1 ? "bg-[#f00]" : ""}`} />}
                    {k > 0 && (i === 5 && k === 1 ? <Badge kind="O" /> : <span className="block size-[12px] rounded-[2px] border border-[#bbb]" />)}
                  </td>
                ))}
                <td className="p-0 text-right">{i === 5 ? "-" : "+"}</td>
              </tr>
            ))}
          </tbody>
        </table>
        <div className="flex-1" />
        <div className="flex h-[17px] shrink-0 items-center bg-[#f0f0f0] pl-[17px]"><div className="h-[2px] w-[101px] bg-[#8e8e8e]" /></div>
      </div>
      <div className={`flex h-[21px] shrink-0 items-start text-[12px] ${TAHOMA}`}>
        <button className="ml-[5px] h-[20px] w-[37px] bg-[#86f00c] font-bold text-black">Laps</button>
        <button className="h-[19px] w-[55px] bg-[#f07c08] text-[#3a2408]">Outings</button>
        <span className="flex-1" />
        <svg width="22" height="12" viewBox="0 0 22 12" className="mr-[6px] mt-[5px]" fill="none" stroke="#555" aria-hidden="true"><path d="M5 1.500v8L1 5.500zM16 1.500v8l4-4z" /></svg>
      </div>
    </aside>
  );
}

/* ---------- main area ---------- */
const TABS: [string, string, string][] = [
  ["1", "Compare", "w-[70px]"],
  ["2", "Driver", "w-[111px]"],
  ["3", "wheelSpd", "w-[75px]"],
  ["4", "us-os", "w-[55px]"],
  ["5", "RPM Histo", "w-[79px]"],
  ["6", "Susp Histo", "w-[79px]"],
  ["7", "Susp trv", "w-[67px]"],
  ["8", "Track Report", "w-[91px]"],
  ["9", "Chan Report", "w-[88px]"],
  ["0", "Section Times", "w-[95px]"],
  ["", "Tyres", "w-[54px]"],
  ["", "Traction Circle", "w-[80px]"],
  ["", "Combined G", "w-[70px]"],
  ["", "under over", "w-[64px]"],
];

const SEGMENTS: [string, string][] = [
  ["1", "flex-[247_1_0%] bg-[#303030]"],
  ["2", "flex-[256_1_0%] bg-black"],
  ["3", "flex-[251_1_0%] bg-[#303030]"],
  ["4", "flex-[289_1_0%] bg-[#303030]"],
  ["5", "flex-[256_1_0%] bg-[#303030]"],
  ["6", "flex-[257_1_0%] bg-[#303030]"],
];

const RIGHT_ICONS: [string, string][] = [
  ["props", "mt-[2px]"], ["blue", ""], ["delta", "mt-[7px]"], ["bars", ""], ["zoomW", "mt-[9px]"], ["slashes", ""],
  ["zoomIn", "mt-[8px]"], ["zoomOut", ""], ["zoomY", ""], ["zoomR", ""], ["zoomIn", "mt-[8px]"], ["zoomOut", ""], ["zoomY", ""], ["fit", "mt-[8px]"],
];

function Main() {
  return (
    <main className="flex min-w-0 flex-1 flex-col">
      <div className={`flex h-[30px] shrink-0 bg-black pt-[1px] text-[11px] leading-[14px] text-[#d6d6d6] ${TAHOMA}`}>
        <div className="flex w-1/2 gap-[2px] whitespace-pre pl-[2px]"><Badge kind="M" />[1:51.309] Lap 2,23:27:50, 02/02/2025,  , monza,  [monza-mclaren_720s_gt3_evo-3-2025.02.02-23.27.49.ld]</div>
        <div className="flex w-1/2 gap-[2px] whitespace-pre"><Badge kind="O" />[1:50.434] Lap 6,23:27:50, 02/02/2025,  , monza,  [monza-mclaren_720s_gt3_evo-3-2025.02.02-23.27.49.ld]</div>
      </div>
      <div className={`flex h-[14px] shrink-0 border-y border-[#6a6a6a] text-center text-[12px] leading-[12px] text-[#c8c8c8] ${TAHOMA}`}>
        <div className="flex w-[96px] items-center gap-[2px] bg-[#808080] pl-[3px] text-[#e6e6e6]"><span className="size-[10px] bg-[#86e81c]" />Laps</div>
        {SEGMENTS.map(([t, c]) => (
          <div key={t} className={`relative border-l border-[#c01818] ${c}`}>
            {t}
            {t === "2" && <div className="absolute left-[57.500%] top-0 h-[12px] w-[26%] border border-[#35b535]"><div className="ml-[27%] h-full w-[1px] bg-[#f4f01c]" /></div>}
          </div>
        ))}
      </div>
      <div className="flex min-h-0 flex-1">
        <div className="flex min-w-0 flex-1 flex-col">
          <div className={`flex h-[23px] shrink-0 items-center bg-black text-[11px] ${UI}`}>
            <button className="mr-[3px] flex h-[21px] w-[155px] items-center gap-[5px] bg-gradient-to-b from-[#a8a8a8] to-[#c6c6c6] px-[6px] text-[12px] text-[#222]">
              <Icon n="stack" />1: Base<span className="flex-1" /><span className="border-x-[6px] border-t-[8px] border-x-transparent border-t-[#eee]" />
            </button>
            {TABS.map(([n, t, w], i) => (
              <button key={t} className={`flex h-[19px] shrink-0 items-center justify-center gap-[3px] whitespace-nowrap border-y border-r border-[#4c4c4c] ${w} ${i === 1 ? "justify-start bg-[#0a80c8] pl-[6px] font-bold text-white" : "bg-gradient-to-b from-[#2c2c2c] via-black to-[#1c1c1c] text-[#ececec]"}`}>
                {n && <span className="flex h-[12px] w-[11px] items-center justify-center rounded-[3px] bg-[#e2e2e2] text-[11px] font-bold leading-none text-black">{n}</span>}
                {i === 1 && <><span className="size-[11px] bg-[#86e81c]" /><svg width="13" height="6" viewBox="0 0 13 6" className="mx-[2px]" aria-hidden="true"><path d="M0 1h13" stroke="#fff" /><path d="M0 3h13" stroke="#fff" strokeWidth="3" strokeDasharray="2 1" /></svg></>}
                {t}
              </button>
            ))}
          </div>
          <Chart />
        </div>
        <div className="flex w-[26px] shrink-0 flex-col items-center bg-gradient-to-r from-[#dcdcdc] to-[#bdbdbd]">
          {RIGHT_ICONS.map(([n, m], i) => <div key={i} className={m}><IconButton n={n} /></div>)}
        </div>
      </div>
    </main>
  );
}

export default function App() {
  return (
    <div className={`relative flex h-screen flex-col overflow-hidden bg-[#bdbdbd] ${UI}`}>
      <header className="flex h-[23px] shrink-0 items-center bg-gradient-to-r from-[#f6f6f8] via-[#e4f5f9] to-[#f3f5f1] text-[12px] text-[#1a1a1a]">
        <svg width="17" height="18" viewBox="0 0 17 18" className="mr-[3px]" aria-hidden="true"><rect width="17" height="18" fill="#cf2a30" /><path d="M3 6v5M3 3v1.500M6.500 4h6v3.500h-6V11H14" stroke="#fff" strokeWidth="2" fill="none" /><path d="M1 15h15" stroke="#f3b6b6" strokeWidth="2" strokeDasharray="2 1" /></svg>
        <h1 className="font-['Noto_Sans',sans-serif] text-[11px]">base_ACC - MoTeC i2 Pro (x64) (1.1.6.904)</h1>
        <div className="flex-1" />
        <svg width="106" height="14" viewBox="0 0 106 14" className="mr-[17px]" fill="none" stroke="#222" aria-hidden="true"><path d="M1 7h10M94 2l10 10M104 2 94 12" /><rect x="46.500" y="4" width="8" height="8" rx="1.500" /><path d="M49 4V3c0-1 .5-1 1.500-1H56c1 0 1.500.5 1.500 1.500V9c0 1-.5 1.500-2 1.500" /></svg>
      </header>
      <div className="flex h-[24px] shrink-0 items-center bg-[#d5d5d5] pl-[9px] pr-[5px]">
        <nav className="flex gap-[15px] text-[11px] text-[#222]">
          {["File", "Edit", "View", "Layout", "Add", "Data", "Component", "Tools", "Help"].map((m) => <button key={m}>{m}</button>)}
        </nav>
        <div className="flex-1" />
        <svg width="104" height="23" viewBox="0 0 104 23" role="img" aria-label="i2 MoTeC">
          <rect x="1" y="1" width="26" height="20" fill="#b9252d" stroke="#8c1a20" /><path d="M6 9v9M6 4v3M11.500 6h10v5.500h-10V17H23" stroke="#e8dcdc" strokeWidth="3.500" fill="none" />
          <rect x="32" y="1" width="71" height="20" rx="4" fill="#d9d9d9" stroke="#d93a4a" strokeWidth="2" />
          <text x="67" y="17" textAnchor="middle" fontSize="17" fontWeight="700" fontStyle="italic" fill="#111" stroke="#111" strokeWidth=".4">MoTeC</text>
        </svg>
      </div>
      <div className="flex h-[26px] shrink-0 items-center gap-2 bg-[#d5d5d5] pl-[1px]">
        {[["open", "closeF", "save"], ["down"], ["print", "preview"], ["track", "flagRed", "note", "excel", "film", "calc", "alarm", "list", "check", "ruler"], ["grid", "clock", "windows", "range"], ["left", "right", "flag", "flagPlus"], ["zoomPlus", "zoomOff"], ["play"]].map((g, i) => (
          <div key={i} className="flex">{g.map((n) => <IconButton key={n} n={n} on={n === "windows"} />)}</div>
        ))}
        <div className="relative ml-[1px] h-[18px] w-[126px]">
          <select aria-label="Playback speed" className="block h-[18px] w-full appearance-none bg-white pl-[3px] text-[11px] text-[#222]"><option>1x</option></select>
          <svg width="10" height="6" viewBox="0 0 10 6" className="absolute right-[3px] top-[7px]" fill="none" stroke="#555" aria-hidden="true"><path d="m1 1 4 4 4-4" /></svg>
        </div>
      </div>
      <div className="flex min-h-0 flex-1 pb-[1px]">
        <div className="w-[24px] shrink-0 pl-[1px]">
          {SIDE_TABS.map(([n, t, h]) => (
            <button key={t} className={`flex w-[22px] flex-col items-center gap-[6px] border border-[#909090] bg-[#c6c6c6] pt-[3px] ${h}`}>
              <Icon n={n} size={13} />
              <span className={`whitespace-nowrap text-[11px] leading-[16px] text-[#222] [writing-mode:vertical-rl] ${UI}`}>{t}</span>
            </button>
          ))}
        </div>
        <DataPanel />
        <div className="w-[5px] shrink-0" />
        <Main />
      </div>
      <footer className="flex h-[21px] shrink-0 items-center bg-[#f0f0f0] text-[12px] text-[#111]">
        <div className="h-full w-[404px] border-r border-[#dcdcdc]" />
        <div className="h-full w-[120px] border-r border-[#dcdcdc]" />
        <strong className="whitespace-pre pl-[18px]">Time  73.953693 [s]</strong>
        <strong className="flex items-center gap-[4px] whitespace-pre pl-[24px]"><span className="size-[8px] border border-[#600] bg-[#e00]" />Distance  3756 [m]</strong>
        <span className="flex-1" />
        <div className="flex h-full w-[627px] border-l border-[#dcdcdc]">
          <div className="w-[261px]" />
          <div className="flex w-[268px] items-center gap-[4px] border-l border-[#dcdcdc] pl-[3px] text-[11px]"><Icon n="block" />Not Activated</div>
          <div className="flex items-center gap-[2px] border-l border-[#dcdcdc] pl-[5px] text-[7px] font-bold leading-[7px] text-[#3a53b0]"><span>AB<br />&nbsp;&nbsp;AC</span></div>
        </div>
      </footer>

      <svg className="absolute left-[620px] top-[210px] h-[170px] w-[135px]" viewBox="620 210 135 170" aria-hidden="true"><path d="M751 215 727 227l5 4-107 135 10 8L739 237l6 5z" fill="#fbfb04" /></svg>
      <Magnifier />
      <TrackWindow />
      <Emblem />
    </div>
  );
}
